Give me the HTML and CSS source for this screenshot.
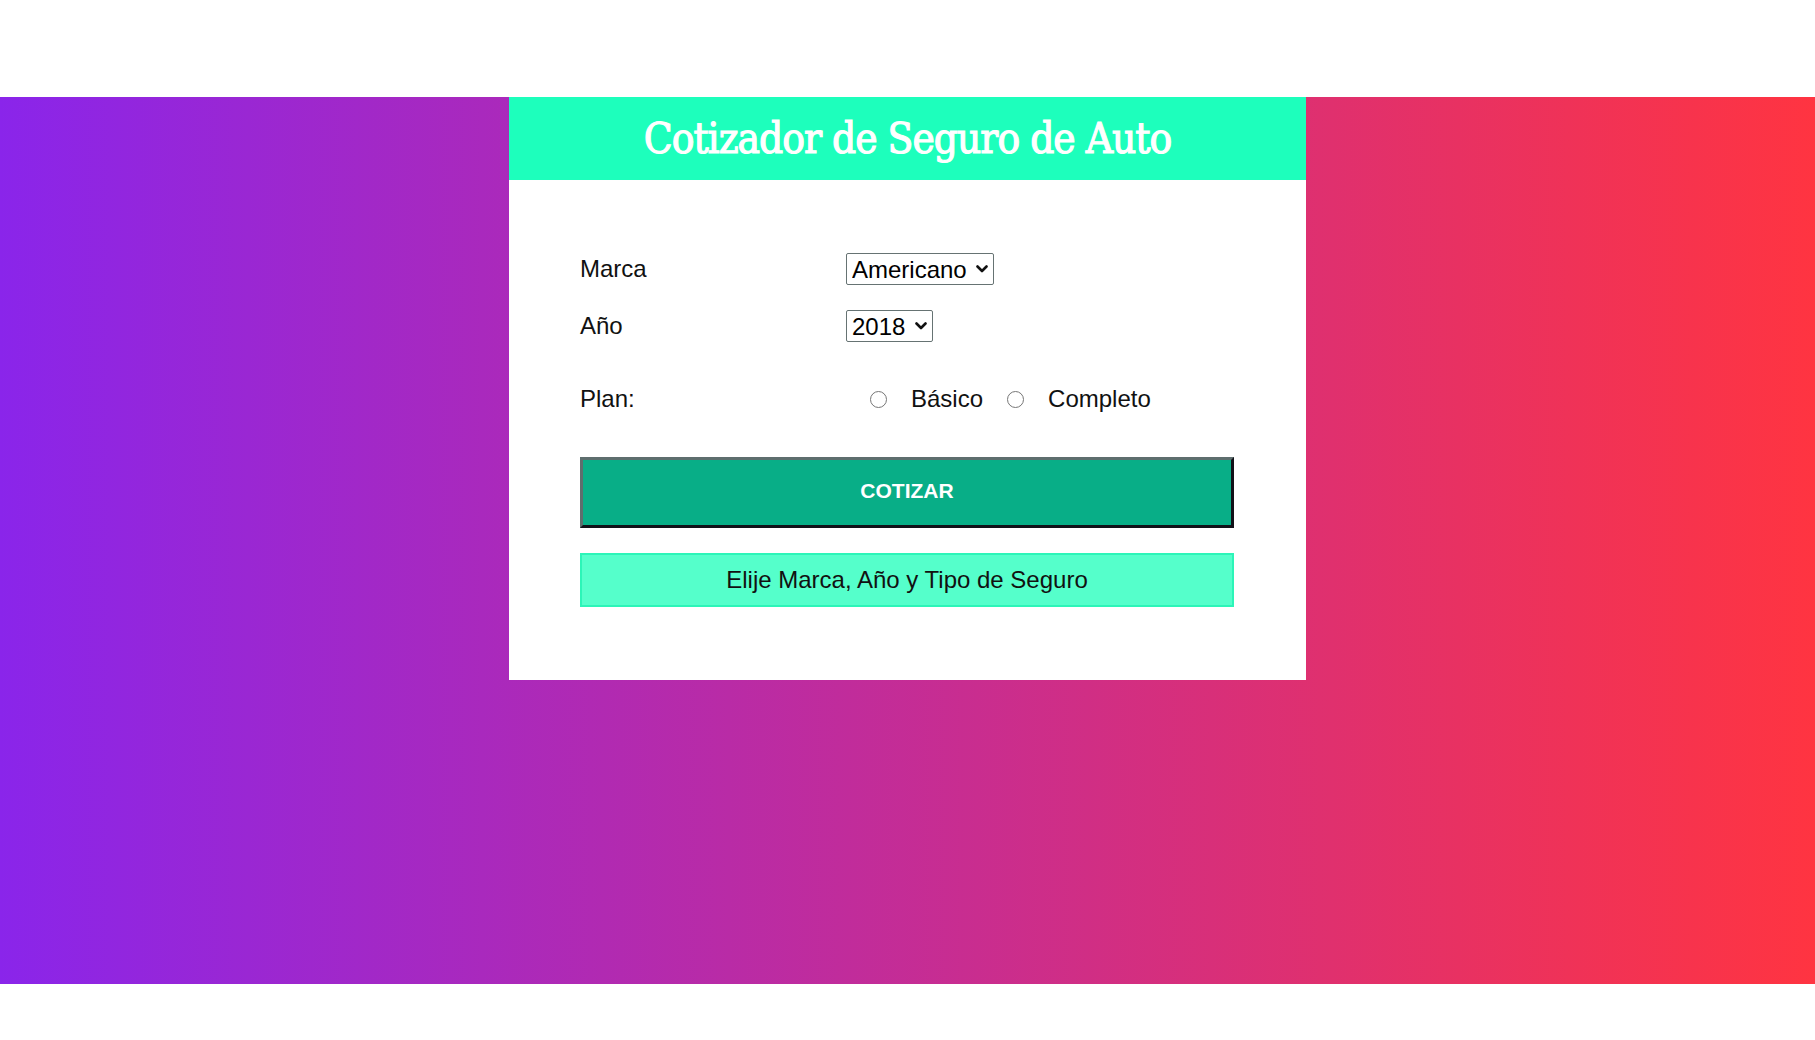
FILE: index.html
```html
<!DOCTYPE html>
<html lang="es">
<head>
<meta charset="utf-8">
<title>Cotizador de Seguro de Auto</title>
<link rel="stylesheet" href="styles.css">
</head>
<body>
<div class="band">
  <div class="card">
    <header class="header">
      <h1 class="title">Cotizador de Seguro de Auto</h1>
    </header>
    <form class="form">
      <div class="row">
        <label class="label">Marca</label>
        <span class="select-wrap">
          <select class="select">
            <option>Americano</option>
            <option>Europeo</option>
            <option>Asiatico</option>
          </select>
          <svg class="chev" viewBox="0 0 12 8" width="12" height="8"><path d="M1.5 1.5 L6 6 L10.5 1.5" fill="none" stroke="#111" stroke-width="2.6" stroke-linecap="round" stroke-linejoin="round"/></svg>
        </span>
      </div>
      <div class="row">
        <label class="label">Año</label>
        <span class="select-wrap">
          <select class="select">
            <option>2018</option>
            <option>2017</option>
          </select>
          <svg class="chev" viewBox="0 0 12 8" width="12" height="8"><path d="M1.5 1.5 L6 6 L10.5 1.5" fill="none" stroke="#111" stroke-width="2.6" stroke-linecap="round" stroke-linejoin="round"/></svg>
        </span>
      </div>
      <div class="row row-plan">
        <label class="label">Plan:</label>
        <input class="radio" type="radio" name="plan" id="basico">
        <label class="radio-label" for="basico">Básico</label>
        <input class="radio" type="radio" name="plan" id="completo">
        <label class="radio-label" for="completo">Completo</label>
      </div>
      <button type="button" class="btn">COTIZAR</button>
      <div class="message">Elije Marca, Año y Tipo de Seguro</div>
    </form>
  </div>
</div>
</body>
</html>
```
FILE: styles.css
```css
html, body {
  margin: 0;
  padding: 0;
  background: #ffffff;
}
body {
  font-family: "Liberation Sans", Arial, sans-serif;
  padding-top: 97px;
  height: 1040px;
  box-sizing: border-box;
}
.band {
  height: 887px;
  background: linear-gradient(to right, #8a25ea 0%, #ff3441 100%);
  display: flex;
  justify-content: center;
  align-items: flex-start;
}
.card {
  width: 797px;
  background: #ffffff;
  padding-bottom: 73px;
}
.header {
  background: #1dffbc;
  height: 83px;
  display: flex;
  align-items: center;
  justify-content: center;
}
.title {
  margin: 0;
  color: #ffffff;
  font-family: "DejaVu Serif", serif;
  font-stretch: condensed;
  font-weight: normal;
  font-size: 42px;
  letter-spacing: -1px;
  line-height: 1;
  -webkit-text-stroke: 1.1px #ffffff;
}
.form {
  padding: 73px 72px 0 71px;
  display: flex;
  flex-direction: column;
}
.row {
  display: flex;
  align-items: center;
  height: 32px;
  font-size: 24px;
  color: #111;
}
.row + .row {
  margin-top: 25px;
}
.row-plan {
  margin-top: 41px !important;
}
.label {
  width: 266px;
  flex: none;
}
.select-wrap {
  position: relative;
  display: inline-flex;
}
.select {
  -webkit-appearance: none;
  appearance: none;
  font-family: "Liberation Sans", Arial, sans-serif;
  font-size: 24px;
  height: 32px;
  border: 1.5px solid #667373;
  border-radius: 2px;
  background: #fff;
  color: #000;
  padding: 0 26px 0 5px;
  margin: 0;
}
.chev {
  position: absolute;
  right: 6px;
  top: 12px;
  pointer-events: none;
}
.radio {
  width: 17px;
  height: 17px;
  margin: 0 24px 0 24px;
}
.radio-label + .radio {
  margin-left: 24px;
}
.btn {
  margin-top: 42px;
  height: 71px;
  background: #08ae87;
  color: #ffffff;
  font-family: "Liberation Sans", Arial, sans-serif;
  font-weight: bold;
  font-size: 21px;
  border-style: solid;
  border-width: 3px;
  border-color: #5e6e6e #111118 #111118 #5e6e6e;
  padding: 0 0 3px;
}
.message {
  margin-top: 25px;
  height: 54px;
  box-sizing: border-box;
  background: #55ffcb;
  border: 2px solid #2cf5b8;
  display: flex;
  align-items: center;
  justify-content: center;
  font-size: 24px;
  color: #111;
}
```
